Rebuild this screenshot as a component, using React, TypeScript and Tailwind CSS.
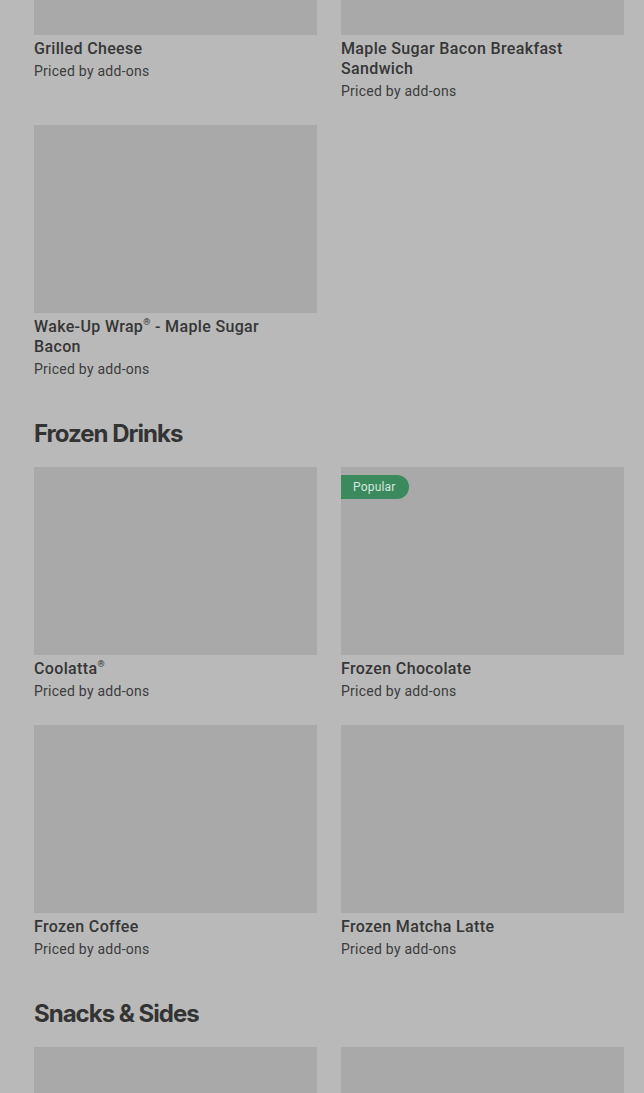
import React from "react";

type Item = { name?: React.ReactNode; key: string; popular?: boolean };

const font = { fontFamily: "Roboto, 'Liberation Sans', sans-serif" };

const Reg = () => <sup className="relative top-[-1px] align-super text-[9px] leading-none">®</sup>;

function Card({ item }: { item: Item }) {
  return (
    <div className="flex flex-col">
      <div className="relative h-[188px] w-full bg-[#a9a9a9]">
        {item.popular && (
          <div className="absolute left-0 top-[8px] flex h-[24px] items-center rounded-r-full bg-[#3b8a5e] pl-[12px] pr-[13px] text-[12px] tracking-[0.2px] text-[#d6e6dc]">
            Popular
          </div>
        )}
      </div>
      {item.name && (
        <>
          <div className="mt-[4px] pr-[8px] text-[16px] font-medium leading-[20px] tracking-[0.35px] text-[#363636]">
            {item.name}
          </div>
          <div className="mt-[2px] text-[14px] leading-[20px] tracking-[0.25px] text-[#3c3c3c]">
            Priced by add-ons
          </div>
        </>
      )}
    </div>
  );
}

function Grid({ items }: { items: Item[] }) {
  return (
    <div className="grid grid-cols-2 gap-x-[24px] gap-y-[24px]">
      {items.map((it) => (
        <Card key={it.key} item={it} />
      ))}
    </div>
  );
}

function Heading({ children }: { children: React.ReactNode }) {
  return (
    <h2
      className="mt-[39px] mb-[17px] text-[24px] font-bold leading-[32px] tracking-[-1px] text-[#333333]"
      style={{ fontFamily: "Inter, 'Liberation Sans', sans-serif" }}
    >
      {children}
    </h2>
  );
}

export default function App() {
  return (
    <div className="h-[1093px] w-full overflow-hidden bg-[#b9b9b9]" style={font}>
      <div className="-mt-[153px] pl-[34px] pr-[20px]">
        <Grid
          items={[
            { key: "gc", name: "Grilled Cheese" },
            { key: "ms", name: "Maple Sugar Bacon Breakfast Sandwich" },
            {
              key: "wu",
              name: (
                <>
                  Wake-Up Wrap<Reg /> - Maple Sugar Bacon
                </>
              ),
            },
          ]}
        />
        <Heading>Frozen Drinks</Heading>
        <Grid
          items={[
            {
              key: "co",
              name: (
                <>
                  Coolatta<Reg />
                </>
              ),
            },
            { key: "fc", name: "Frozen Chocolate", popular: true },
            { key: "fco", name: "Frozen Coffee" },
            { key: "fm", name: "Frozen Matcha Latte" },
          ]}
        />
        <Heading>Snacks &amp; Sides</Heading>
        <Grid items={[{ key: "s1" }, { key: "s2" }]} />
      </div>
    </div>
  );
}
